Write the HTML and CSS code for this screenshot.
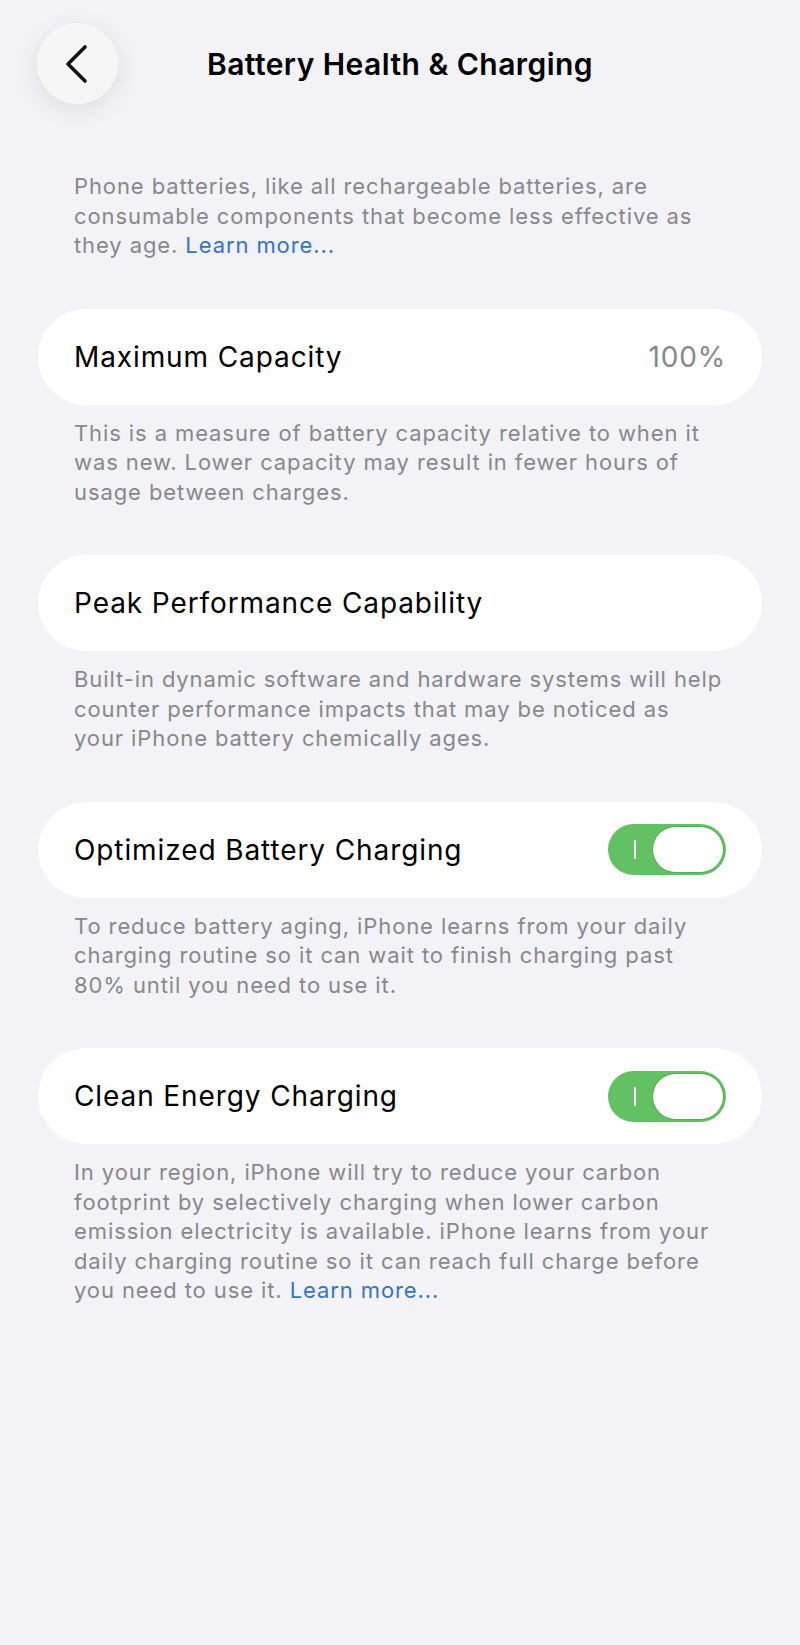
FILE: index.html
```html
<!DOCTYPE html>
<html lang="en">
<head>
    <meta charset="UTF-8">
    <meta name="viewport" content="width=device-width, initial-scale=1.0">
    <title>Battery Health &amp; Charging</title>
    <link rel="stylesheet" href="styles.css">
</head>
<body>

    <!-- Top bar with back button -->
    <div class="nav-bar">
        <button class="back-btn" aria-label="Back">
            <svg width="26" height="40" viewBox="0 0 26 40">
                <path d="M21 3 L4 20 L21 37" fill="none" stroke="#111" stroke-width="3.6" stroke-linecap="round" stroke-linejoin="round"/>
            </svg>
        </button>
        <div class="nav-title">Battery Health &amp; Charging</div>
        <div></div>
    </div>

    <div class="content">
        <p class="note intro">Phone batteries, like all rechargeable batteries, are consumable components that become less effective as they age. <a href="#">Learn more...</a></p>

        <div class="row">
            <span class="row-label">Maximum Capacity</span>
            <span class="row-value">100%</span>
        </div>
        <p class="note">This is a measure of battery capacity relative to when it was new. Lower capacity may result in fewer hours of usage between charges.</p>

        <div class="row">
            <span class="row-label">Peak Performance Capability</span>
        </div>
        <p class="note">Built-in dynamic software and hardware systems will help counter performance impacts that may be noticed as your iPhone battery chemically ages.</p>

        <div class="row">
            <span class="row-label">Optimized Battery Charging</span>
            <span class="switch on"><span class="switch-mark"></span><span class="switch-knob"></span></span>
        </div>
        <p class="note">To reduce battery aging, iPhone learns from your daily charging routine so it can wait to finish charging past 80% until you need to use it.</p>

        <div class="row">
            <span class="row-label">Clean Energy Charging</span>
            <span class="switch on"><span class="switch-mark"></span><span class="switch-knob"></span></span>
        </div>
        <p class="note">In your region, iPhone will try to reduce your carbon footprint by selectively charging when lower carbon emission electricity is available. iPhone learns from your daily charging routine so it can reach full charge before you need to use it. <a href="#">Learn more...</a></p>
    </div>

</body>
</html>
```

FILE: styles.css
```css
body {
    margin: 0;
    background-color: #f2f2f7;
    font-family: Inter, 'Noto Sans', sans-serif;
    color: #000;
    min-height: 1645px;
}

/* Navigation bar */
.nav-bar {
    display: grid;
    grid-template-columns: 80px 1fr 80px;
    align-items: center;
    padding: 23px 38px 0;
    height: 80px;
}
.back-btn {
    width: 81px;
    height: 81px;
    margin-left: -1px;
    border-radius: 50%;
    border: 1px solid #fafafa;
    padding: 0;
    background-color: #f5f5f6;
    box-shadow: 0 6px 26px rgba(0, 0, 0, 0.09);
    display: flex;
    align-items: center;
    justify-content: center;
}
.back-btn svg {
    margin-left: -2px;
}
.nav-title {
    text-align: center;
    font-size: 30px;
    font-weight: 600;
    letter-spacing: 0.45px;
}

/* Grouped rows */
.content {
    padding: 69px 38px 0;
}
.note {
    margin: 14px 36px 48px;
    font-size: 22px;
    line-height: 29.5px;
    letter-spacing: 0.9px;
    color: #88888c;
}
.note.intro {
    margin-top: 0;
}
.note a {
    color: #3474c8;
    text-decoration: none;
}
.row {
    height: 96px;
    background-color: #fff;
    border-radius: 48px;
    display: flex;
    align-items: center;
    justify-content: space-between;
    padding: 0 36px 0 36px;
}
.row-label {
    font-size: 28px;
    letter-spacing: 0.9px;
}
.row-value {
    font-size: 28px;
    letter-spacing: 0.8px;
    color: #88888c;
}

/* Toggle switch */
.switch {
    position: relative;
    width: 118px;
    height: 51px;
    border-radius: 26px;
    background-color: #62c163;
}
.switch-mark {
    position: absolute;
    left: 26px;
    top: 16px;
    width: 2px;
    height: 19px;
    background-color: #fff;
    border-radius: 1px;
}
.switch-knob {
    position: absolute;
    right: 3px;
    top: 3px;
    width: 70px;
    height: 45px;
    border-radius: 23px;
    background-color: #fff;
    box-shadow: 0 0 0 1px rgba(40, 120, 40, 0.25);
}
```
